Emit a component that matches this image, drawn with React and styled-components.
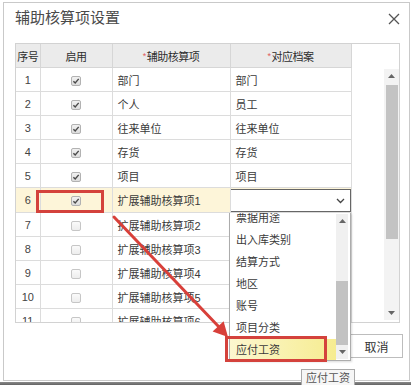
import React from 'react';
import styled, {createGlobalStyle} from 'styled-components';

const GlobalStyle = createGlobalStyle`
    html, body {
        margin: 0;
        padding: 0;
        background: #ffffff;
    }
    body {
        font-family: "Liberation Sans", "Noto Sans CJK SC", sans-serif;
        color: #333;
    }
`;

const rows = [
    {no: 1, on: true, item: '部门', file: '部门'},
    {no: 2, on: true, item: '个人', file: '员工'},
    {no: 3, on: true, item: '往来单位', file: '往来单位'},
    {no: 4, on: true, item: '存货', file: '存货'},
    {no: 5, on: true, item: '项目', file: '项目'},
    {no: 6, on: true, item: '扩展辅助核算项1', file: null, active: true},
    {no: 7, on: false, item: '扩展辅助核算项2', file: ''},
    {no: 8, on: false, item: '扩展辅助核算项3', file: ''},
    {no: 9, on: false, item: '扩展辅助核算项4', file: ''},
    {no: 10, on: false, item: '扩展辅助核算项5', file: ''},
    {no: 11, on: false, item: '扩展辅助核算项6', file: ''},
];

const options = ['票据用途', '出入库类别', '结算方式', '地区', '账号', '项目分类', '应付工资'];

function Check({checked}) {
    return (
        <CheckBox $checked={checked}>
            {checked && (
                <svg width="8" height="8" viewBox="0 0 8 8">
                    <path d="M1.4 4.2 L3.2 6 L6.7 1.9" fill="none" stroke="#4a4a4a" strokeWidth="1.4"/>
                </svg>
            )}
        </CheckBox>
    );
}

function Arrow({dir}) {
    return (
        <svg width="7" height="4" viewBox="0 0 7 4">
            {dir === 'up'
                ? <path d="M0 4 L3.5 0 L7 4 Z" fill="#666"/>
                : <path d="M0 0 L3.5 4 L7 0 Z" fill="#666"/>}
        </svg>
    );
}

function App() {
    return (
        <Screen>
            <GlobalStyle/>
            <Dialog>
                <TitleBar>
                    <Title>辅助核算项设置</Title>
                    <Close>
                        <svg width="12" height="12" viewBox="0 0 12 12">
                            <path d="M1 1 L11 11 M11 1 L1 11" stroke="#555" strokeWidth="1.3"/>
                        </svg>
                    </Close>
                </TitleBar>

                <Body>
                    <GridFrame>
                        <GridTable>
                            <colgroup>
                                <col style={{width: 24}}/>
                                <col style={{width: 72}}/>
                                <col style={{width: 118}}/>
                                <col style={{width: 121}}/>
                            </colgroup>
                            <thead>
                                <tr>
                                    <Th>序号</Th>
                                    <Th>启用</Th>
                                    <Th><Star>*</Star>辅助核算项</Th>
                                    <Th><Star>*</Star>对应档案</Th>
                                </tr>
                            </thead>
                            <tbody>
                                {rows.map((r) => (
                                    <Row key={r.no} $active={r.active}>
                                        <NoCell>{r.no}</NoCell>
                                        <CheckCell><Check checked={r.on}/></CheckCell>
                                        <Td>{r.item}</Td>
                                        {r.file === null ? (
                                            <SelectCell>
                                                <SelectBox>
                                                    <svg width="9" height="6" viewBox="0 0 9 6">
                                                        <path d="M1 1 L4.5 4.5 L8 1" fill="none" stroke="#444" strokeWidth="1.3"/>
                                                    </svg>
                                                </SelectBox>
                                            </SelectCell>
                                        ) : (
                                            <Td>{r.file}</Td>
                                        )}
                                    </Row>
                                ))}
                            </tbody>
                        </GridTable>

                        <SideArea>
                            <ScrollBar $height={251}>
                                <ScrollBtn><Arrow dir="up"/></ScrollBtn>
                                <ScrollThumb $top={2} $height={154}/>
                                <ScrollFill/>
                                <ScrollBtn><Arrow dir="down"/></ScrollBtn>
                            </ScrollBar>
                        </SideArea>
                    </GridFrame>

                    <Footer>
                        <Button>确定</Button>
                        <Button>取消</Button>
                    </Footer>
                </Body>
            </Dialog>
            <BottomBar/>

            <DropList>
                <DropItems>
                    {options.map((o, i) => (
                        <DropItem key={o} $hl={i === options.length - 1}>{o}</DropItem>
                    ))}
                </DropItems>
                <DropScroll>
                    <DropBtn><Arrow dir="up"/></DropBtn>
                    <DropTrack>
                        <DropThumb/>
                    </DropTrack>
                    <DropBtn><Arrow dir="down"/></DropBtn>
                </DropScroll>
            </DropList>

            <Tooltip>应付工资</Tooltip>

            <RedBox $x={36} $y={190} $w={68} $h={23}/>
            <RedBox $x={225} $y={336} $w={102} $h={26}/>

            <ArrowLayer width="411" height="385" viewBox="0 0 411 385">
                <line x1="114" y1="217" x2="219" y2="327" stroke="#d8403a" strokeWidth="3" strokeLinecap="round"/>
                <path d="M228 337 L212.6 331.6 L223.6 321.2 Z" fill="#d8403a"/>
            </ArrowLayer>
        </Screen>
    );
}

export default App;

const Screen = styled.div`
    position: relative;
    width: 411px;
    height: 385px;
    overflow: hidden;
    background: #fff;
`;

const Dialog = styled.div`
    margin: 2px 0 0 3px;
    width: 405px;
    height: 377px;
    border: 1px solid #c9c9c9;
    background: #fff;
    display: flex;
    flex-direction: column;
`;

const TitleBar = styled.div`
    height: 30px;
    display: flex;
    align-items: center;
    justify-content: space-between;
    padding: 0 9px 0 11px;
`;

const Title = styled.div`
    font-size: 15px;
    color: #4a4a4a;
    line-height: 30px;
`;

const Close = styled.div`
    display: flex;
    align-items: center;
    padding-top: 1px;
`;

const Body = styled.div`
    padding: 10px 0 0 11px;
    display: flex;
    flex-direction: column;
`;

const GridFrame = styled.div`
    width: 383px;
    height: 278px;
    border: 1px solid #d2d2d2;
    display: flex;
    overflow: hidden;
`;

const GridTable = styled.table`
    width: 335px;
    border-collapse: collapse;
    table-layout: fixed;
    font-size: 11px;
    flex: none;
    align-self: flex-start;
`;

const Th = styled.th`
    height: 23px;
    padding: 0;
    background: #ebebeb;
    border-right: 1px solid #d6d6d6;
    border-bottom: 1px solid #d6d6d6;
    font-weight: normal;
    color: #2e2e2e;
    text-align: center;
    white-space: nowrap;
    letter-spacing: -0.5px;
`;

const Star = styled.span`
    color: #e05a5a;
    font-size: 9px;
    margin-right: 1px;
    vertical-align: 2px;
`;

const Row = styled.tr`
    background: ${(p) => (p.$active ? '#fdf5d9' : '#fff')};
`;

const Td = styled.td`
    height: 23px;
    padding: 0 0 0 5px;
    border-right: 1px solid #dcdcdc;
    border-bottom: 1px solid #dcdcdc;
    color: #3a3a3a;
    white-space: nowrap;
    overflow: hidden;
`;

const NoCell = styled(Td)`
    padding: 0;
    text-align: center;
    color: #444;
`;

const CheckCell = styled(Td)`
    padding: 0;
    text-align: center;
`;

const SelectCell = styled(Td)`
    padding: 0;
    position: relative;
`;

const SelectBox = styled.div`
    box-sizing: border-box;
    height: 23px;
    margin: 1px 0 0 -1px;
    border: 1px solid #666;
    background: #fff;
    display: flex;
    align-items: center;
    justify-content: flex-end;
    padding-right: 5px;
`;

const CheckBox = styled.span`
    display: inline-flex;
    align-items: center;
    justify-content: center;
    box-sizing: border-box;
    width: 10px;
    height: 10px;
    border: 1px solid ${(p) => (p.$checked ? '#b2b2b2' : '#c6c6c6')};
    border-radius: 2px;
    background: ${(p) => (p.$checked ? 'linear-gradient(#f1f1f1, #dcdcdc)' : 'linear-gradient(#fafafa, #ededed)')};
    vertical-align: middle;
`;

const SideArea = styled.div`
    flex: 1;
    display: flex;
    justify-content: flex-end;
    padding: 25px 0 0 0;
`;

const ScrollBar = styled.div`
    width: 15px;
    height: ${(p) => p.$height}px;
    background: #f3f3f3;
    display: flex;
    flex-direction: column;
    align-items: center;
`;

const ScrollBtn = styled.div`
    height: 14px;
    width: 15px;
    display: flex;
    align-items: center;
    justify-content: center;
    flex: none;
`;

const ScrollThumb = styled.div`
    margin-top: ${(p) => p.$top}px;
    width: 12px;
    height: ${(p) => p.$height}px;
    background: #c3c3c3;
    flex: none;
`;

const ScrollFill = styled.div`
    flex: 1;
`;

const Footer = styled.div`
    display: flex;
    justify-content: flex-end;
    gap: 4px;
    padding: 11px 6px 0 0;
`;

const Button = styled.button`
    width: 53px;
    height: 24px;
    border: 1px solid #bdbdbd;
    background: #fff;
    font-family: "Liberation Sans", "Noto Sans CJK SC", sans-serif;
    font-size: 12px;
    color: #333;
    padding: 0;
`;

const BottomBar = styled.div`
    margin-top: 1px;
    height: 6px;
    background: linear-gradient(#8a8a8a, #3c3c3c);
`;

const DropList = styled.div`
    position: absolute;
    left: 229px;
    top: 213px;
    width: 120px;
    height: 147px;
    border: 1px solid #acacac;
    border-top: none;
    background: #fff;
    display: flex;
    overflow: hidden;
    box-shadow: 1px 1px 2px rgba(0, 0, 0, 0.15);
`;

const DropItems = styled.div`
    flex: 1;
    margin-top: -6px;
`;

const DropItem = styled.div`
    height: 22px;
    line-height: 22px;
    padding-left: 6px;
    font-size: 11px;
    color: #3a3a3a;
    background: ${(p) => (p.$hl ? 'linear-gradient(to right, #fcf7cf, #f6ec90)' : 'transparent')};
`;

const DropScroll = styled.div`
    width: 12px;
    margin: 1px 2px 1px 0;
    background: #f0f0f0;
    display: flex;
    flex-direction: column;
`;

const DropBtn = styled.div`
    height: 14px;
    display: flex;
    align-items: center;
    justify-content: center;
    flex: none;
`;

const DropTrack = styled.div`
    flex: 1;
    display: flex;
    flex-direction: column;
    justify-content: flex-end;
`;

const DropThumb = styled.div`
    height: 64px;
    background: #c2c2c2;
`;

const Tooltip = styled.div`
    position: absolute;
    left: 301px;
    top: 369px;
    height: 17px;
    padding: 0 4px;
    border: 1px solid #a9a9a9;
    background: #f6f6f6;
    font-size: 11px;
    line-height: 17px;
    color: #555;
`;

const RedBox = styled.div`
    position: absolute;
    left: ${(p) => p.$x}px;
    top: ${(p) => p.$y}px;
    width: ${(p) => p.$w}px;
    height: ${(p) => p.$h}px;
    box-sizing: border-box;
    border: 3px solid #d4423c;
    pointer-events: none;
`;

const ArrowLayer = styled.svg`
    position: absolute;
    left: 0;
    top: 0;
    pointer-events: none;
`;
